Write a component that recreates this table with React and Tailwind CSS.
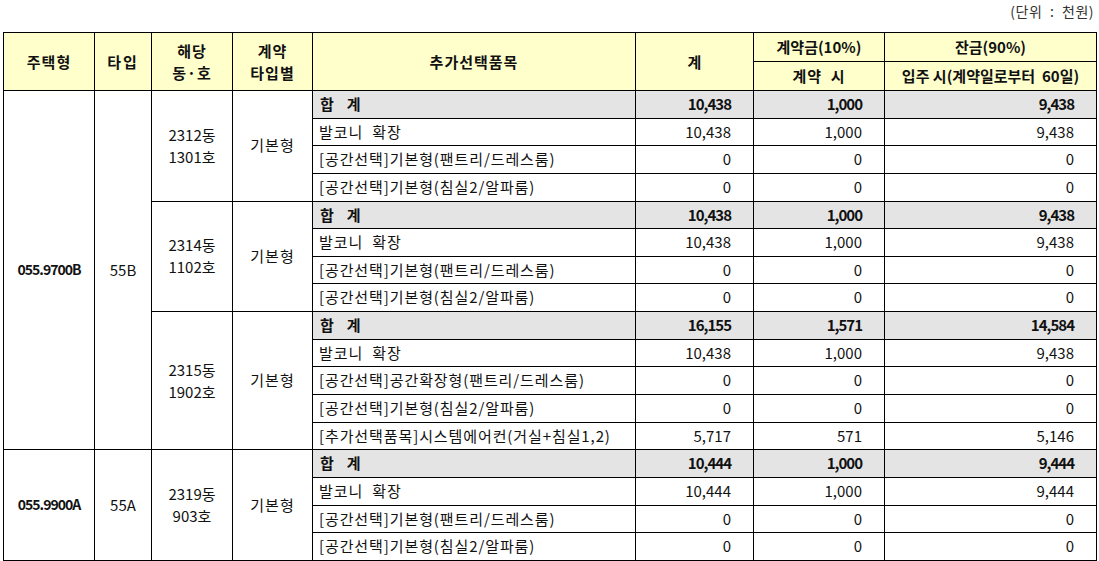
import React from 'react';

const basic = [
  { name: '발코니 확장', total: '10,438', down: '1,000', rest: '9,438' },
  { name: '[공간선택]기본형(팬트리/드레스룸)', total: '0', down: '0', rest: '0' },
  { name: '[공간선택]기본형(침실2/알파룸)', total: '0', down: '0', rest: '0' },
];

const units = [
  {
    house: '055.9700B', type: '55B', span: 13,
    dong: '2312동', ho: '1301호',
    sum: { total: '10,438', down: '1,000', rest: '9,438' },
    items: basic,
  },
  {
    dong: '2314동', ho: '1102호',
    sum: { total: '10,438', down: '1,000', rest: '9,438' },
    items: basic,
  },
  {
    dong: '2315동', ho: '1902호',
    sum: { total: '16,155', down: '1,571', rest: '14,584' },
    items: [
      { name: '발코니 확장', total: '10,438', down: '1,000', rest: '9,438' },
      { name: '[공간선택]공간확장형(팬트리/드레스룸)', total: '0', down: '0', rest: '0' },
      { name: '[공간선택]기본형(침실2/알파룸)', total: '0', down: '0', rest: '0' },
      { name: '[추가선택품목]시스템에어컨(거실+침실1,2)', total: '5,717', down: '571', rest: '5,146' },
    ],
  },
  {
    house: '055.9900A', type: '55A', span: 4,
    dong: '2319동', ho: '903호',
    sum: { total: '10,444', down: '1,000', rest: '9,444' },
    items: [
      { name: '발코니 확장', total: '10,444', down: '1,000', rest: '9,444' },
      { name: '[공간선택]기본형(팬트리/드레스룸)', total: '0', down: '0', rest: '0' },
      { name: '[공간선택]기본형(침실2/알파룸)', total: '0', down: '0', rest: '0' },
    ],
  },
];

const th = 'border border-black bg-[#ffffcc] font-bold text-center align-middle p-0 leading-[22px]';
const td = 'border border-black align-middle p-0';
const num = 'border border-black text-right pr-[22px] align-middle';
const sumNum = `${num} bg-[#e4e4e4] font-bold tracking-[-1px]`;

export default function App() {
  return (
    <div
      className="w-[1099px] h-[561px] bg-white text-[15px] text-[#111] leading-tight"
      style={{ fontFamily: '"Noto Sans CJK KR", "Malgun Gothic", sans-serif' }}
    >
      <div className="h-[32px] flex justify-end items-start pt-[3px] pr-[5px] text-[14px] text-[#333] tracking-[0.5px] [word-spacing:4px]">
        (단위 : 천원)
      </div>
      <table className="ml-[3px] w-[1093px] table-fixed border-collapse">
        <colgroup>
          <col className="w-[91px]" />
          <col className="w-[57px]" />
          <col className="w-[81px]" />
          <col className="w-[80px]" />
          <col className="w-[323px]" />
          <col className="w-[118px]" />
          <col className="w-[131px]" />
          <col className="w-[212px]" />
        </colgroup>
        <thead>
          <tr className="h-[29px]">
            <th rowSpan={2} className={`${th} tracking-[1px]`}>주택형</th>
            <th rowSpan={2} className={`${th} tracking-[2px]`}>타입</th>
            <th rowSpan={2} className={`${th} tracking-[1px]`}>해당<br />동·호</th>
            <th rowSpan={2} className={`${th} tracking-[1px]`}>계약<br />타입별</th>
            <th rowSpan={2} className={`${th} tracking-[1px]`}>추가선택품목</th>
            <th rowSpan={2} className={th}>계</th>
            <th className={th}>계약금(10%)</th>
            <th className={th}>잔금(90%)</th>
          </tr>
          <tr className="h-[29px]">
            <th className={th}><span className="whitespace-pre tracking-[1px]">계약  시</span></th>
            <th className={th}><span className="whitespace-pre">입주 시(계약일로부터  60일)</span></th>
          </tr>
        </thead>
        <tbody>
          {units.map((u, ui) => {
            const n = u.items.length + 1;
            return (
              <React.Fragment key={ui}>
                <tr className="h-[27.65px]">
                  {u.house && (
                    <td rowSpan={u.span} className={`${td} text-center font-bold text-[14px] tracking-[-1px]`}>{u.house}</td>
                  )}
                  {u.type && (
                    <td rowSpan={u.span} className={`${td} text-center`}>{u.type}</td>
                  )}
                  <td rowSpan={n} className={`${td} text-center leading-[22px]`}>
                    {u.dong}<br />{u.ho}
                  </td>
                  <td rowSpan={n} className={`${td} text-center tracking-[1px]`}>기본형</td>
                  <td className={`${td} bg-[#e4e4e4] font-bold pl-[7px]`}>
                    <span className="mr-[13px]">합</span>계
                  </td>
                  <td className={sumNum}>{u.sum.total}</td>
                  <td className={sumNum}>{u.sum.down}</td>
                  <td className={sumNum}>{u.sum.rest}</td>
                </tr>
                {u.items.map((it, i) => (
                  <tr key={i} className="h-[27.65px]">
                    <td className={`${td} pl-[6px] whitespace-nowrap tracking-[0.9px] [word-spacing:5px]`}>{it.name}</td>
                    <td className={num}>{it.total}</td>
                    <td className={num}>{it.down}</td>
                    <td className={num}>{it.rest}</td>
                  </tr>
                ))}
              </React.Fragment>
            );
          })}
        </tbody>
      </table>
    </div>
  );
}
